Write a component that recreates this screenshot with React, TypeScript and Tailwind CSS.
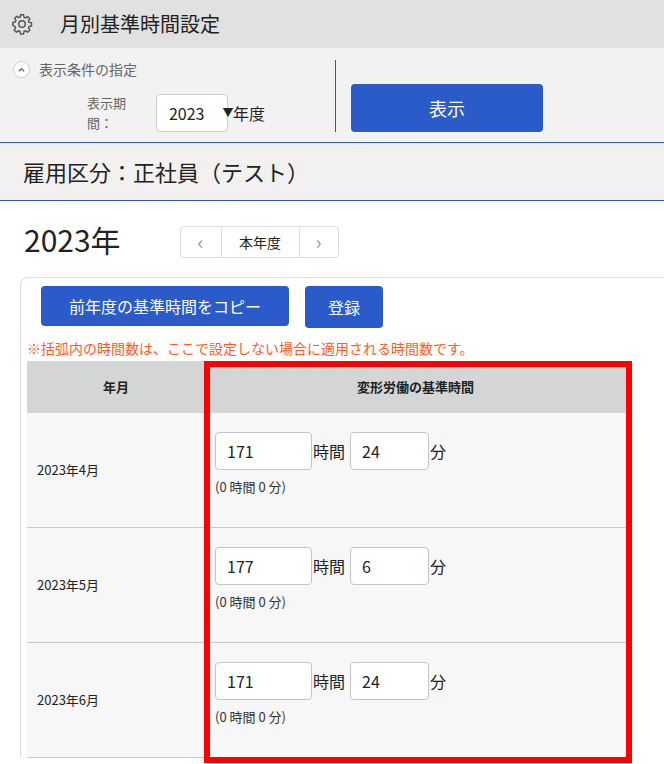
import React from "react";

const f = { fontFamily: '"Noto Sans CJK JP", "Noto Sans", sans-serif' };

function Row({ m, h, mi }: { m: string; h: string; mi: string }) {
  return (
    <div className="flex h-[115px] border-b border-[#c8c8c8] bg-[#f7f7f7]">
      <div className="w-[178px] border-r border-[#c8c8c8] flex items-center pl-[10px] text-[13px] text-[#222]">{m}</div>
      <div className="flex-1 pl-[10px] pt-[19px]">
        <div className="flex items-center">
          <div className="w-[97px] h-[38px] rounded-[4px] border border-[#c4c4c4] bg-white flex items-center pl-[11px] text-[16px] text-[#222]">{h}</div>
          <span className="text-[16px] text-[#222] ml-[1px] mr-[5px]">時間</span>
          <div className="w-[79px] h-[38px] rounded-[4px] border border-[#c4c4c4] bg-white flex items-center pl-[11px] text-[16px] text-[#222]">{mi}</div>
          <span className="text-[16px] text-[#222] ml-[1px]">分</span>
        </div>
        <div className="text-[13px] text-[#333] mt-[7px]">(0 時間 0 分)</div>
      </div>
    </div>
  );
}

export default function App() {
  return (
    <div style={f} className="w-[664px] h-[764px] overflow-hidden bg-white">
      <div className="h-[48px] bg-[#e1e1e1] flex items-center pl-[11px]">
        <svg width="22" height="22" viewBox="0 0 24 24" fill="none" stroke="#555" strokeWidth="1.6" strokeLinejoin="round">
          <path d="M10.3 2h3.4l.5 2.6 1.7.8 2.2-1.5 2.4 2.4-1.5 2.2.8 1.7 2.6.5v3.4l-2.6.5-.8 1.7 1.5 2.2-2.4 2.4-2.2-1.5-1.7.8-.5 2.6h-3.4l-.5-2.6-1.7-.8-2.2 1.5-2.4-2.4 1.5-2.2-.8-1.7L2 13.7v-3.4l2.6-.5.8-1.7-1.5-2.2 2.4-2.4 2.2 1.5 1.7-.8z" />
          <circle cx="12" cy="12" r="3.6" />
        </svg>
        <span className="ml-[27px] text-[20px] text-[#222]">月別基準時間設定</span>
      </div>
      <div className="h-[95px] bg-[#f2f2f2] border-b border-[#2a5bc8] flex">
        <div className="w-[265px] relative">
          <div className="flex items-center pl-[13px] pt-[11px]">
            <div className="w-[17px] h-[17px] rounded-full border border-[#ccc] bg-white flex items-center justify-center">
              <svg width="9" height="9" viewBox="0 0 10 10"><path d="M2 7l3-3 3 3" stroke="#666" strokeWidth="1.5" fill="none" /></svg>
            </div>
            <span className="ml-[9px] text-[14px] text-[#666]">表示条件の指定</span>
          </div>
          <div className="flex items-center pl-[87px] mt-[13px]">
            <span className="text-[13px] text-[#666] mr-[9px]">表示期間：</span>
            <div className="w-[72px] h-[38px] rounded-[4px] border border-[#ccc] bg-white flex items-center pl-[12px] text-[16px] text-[#222]">
              2023<span className="ml-[18px] text-[11px]">▼</span>
            </div>
            <span className="ml-[5px] text-[16px] text-[#222] whitespace-nowrap">年度</span>
          </div>
        </div>
        <div className="ml-[70px] w-px h-[72px] bg-[#555] mt-[12px]" />
        <div className="ml-[15px] mt-[36px] w-[192px] h-[48px] rounded-[4px] bg-[#2a5bc8] text-white text-[18px] flex items-center justify-center">表示</div>
      </div>
      <div className="h-[58px] bg-[#f2f1f0] border-b border-[#2a5bc8] flex items-center pl-[23px] text-[22px] text-[#222]">雇用区分：正社員（テスト）</div>
      <div className="flex items-center h-[74px] pl-[24px] pt-[2px]">
        <span className="text-[30px] text-[#222]">2023年</span>
        <div className="ml-[59px] flex h-[32px] border border-[#ddd] rounded-[4px] mt-[6px]">
          <div className="w-[40px] flex items-center justify-center text-[#999] text-[20px]">‹</div>
          <div className="w-[79px] border-x border-[#ddd] flex items-center justify-center text-[14px] text-[#222]">本年度</div>
          <div className="w-[38px] flex items-center justify-center text-[#999] text-[20px]">›</div>
        </div>
      </div>
      <div className="ml-[20px] mt-[2px] border-l border-t border-[#ddd] rounded-tl-[8px] pl-[6px] pt-[8px]">
        <div className="flex ml-[14px] gap-[16px]">
          <div className="w-[248px] h-[40px] rounded-[4px] bg-[#2a5bc8] text-white text-[16px] flex items-center justify-center">前年度の基準時間をコピー</div>
          <div className="w-[78px] h-[42px] rounded-[4px] bg-[#2a5bc8] text-white text-[16px] flex items-center justify-center">登録</div>
        </div>
        <div className="text-[14px] text-[#ff5a1e] mt-[10px] leading-[20px]">※括弧内の時間数は、ここで設定しない場合に適用される時間数です。</div>
        <div className="relative w-[599px] mt-[3px]">
          <div className="flex h-[52px] bg-[#d4d5d5] text-[13px] font-bold text-[#222]">
            <div className="w-[178px] flex items-center justify-center">年月</div>
            <div className="flex-1 flex items-center justify-center">変形労働の基準時間</div>
          </div>
          <Row m="2023年4月" h="171" mi="24" />
          <Row m="2023年5月" h="177" mi="6" />
          <Row m="2023年6月" h="171" mi="24" />
          <div className="absolute left-[177px] top-0 w-[428px] h-[402px] border-[6px] border-[#ff0000]" />
        </div>
      </div>
    </div>
  );
}
